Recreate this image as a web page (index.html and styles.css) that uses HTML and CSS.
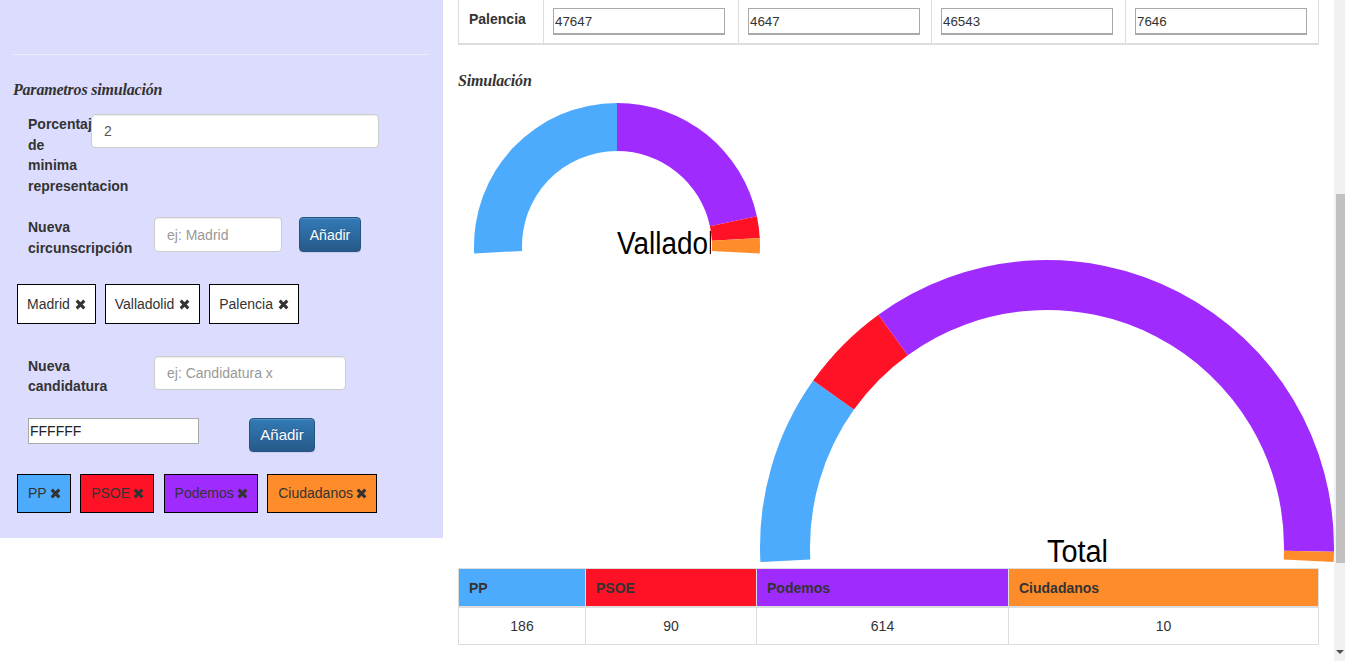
FILE: index.html
```html
<!DOCTYPE html>
<html lang="es">
<head>
<meta charset="utf-8">
<title>Simulación</title>
<link rel="stylesheet" href="styles.css">
</head>
<body>
<div class="app">
  <div class="page">
    <aside class="panel">
      <hr class="sep">
      <h4 class="title">Parametros simulación</h4>

      <div class="frow r1">
        <label class="lbl lbl-narrow">Porcentaje de minima representacion</label>
        <input class="fc fc-pct" type="text" value="2">
      </div>

      <div class="frow r2">
        <label class="lbl lbl-wide">Nueva circunscripción</label>
        <input class="fc fc-circ" type="text" placeholder="ej: Madrid">
        <button class="btn btn-a">Añadir</button>
      </div>

      <div class="tags tags-circ">
        <span class="tag">Madrid <svg class="x" viewBox="0 0 11 11"><path d="M1.7 1.7 L9.3 9.3 M9.3 1.7 L1.7 9.3"/></svg></span>
        <span class="tag">Valladolid <svg class="x" viewBox="0 0 11 11"><path d="M1.7 1.7 L9.3 9.3 M9.3 1.7 L1.7 9.3"/></svg></span>
        <span class="tag">Palencia <svg class="x" viewBox="0 0 11 11"><path d="M1.7 1.7 L9.3 9.3 M9.3 1.7 L1.7 9.3"/></svg></span>
      </div>

      <div class="frow r3">
        <label class="lbl lbl-wide">Nueva candidatura</label>
        <input class="fc fc-cand" type="text" placeholder="ej: Candidatura x">
      </div>

      <div class="frow r4">
        <input class="color-in" type="text" value="FFFFFF">
        <button class="btn btn-b">Añadir</button>
      </div>

      <div class="tags tags-party">
        <span class="tag ptag pp">PP<svg class="x" viewBox="0 0 11 11"><path d="M1.7 1.7 L9.3 9.3 M9.3 1.7 L1.7 9.3"/></svg></span>
        <span class="tag ptag psoe">PSOE<svg class="x" viewBox="0 0 11 11"><path d="M1.7 1.7 L9.3 9.3 M9.3 1.7 L1.7 9.3"/></svg></span>
        <span class="tag ptag podemos">Podemos<svg class="x" viewBox="0 0 11 11"><path d="M1.7 1.7 L9.3 9.3 M9.3 1.7 L1.7 9.3"/></svg></span>
        <span class="tag ptag cs">Ciudadanos<svg class="x" viewBox="0 0 11 11"><path d="M1.7 1.7 L9.3 9.3 M9.3 1.7 L1.7 9.3"/></svg></span>
      </div>
    </aside>

    <main class="content">
      <table class="dist">
        <colgroup>
          <col class="c0"><col class="c1"><col class="c2"><col class="c3"><col class="c4">
        </colgroup>
        <tr>
          <th>Palencia</th>
          <td><input class="num" type="text" value="47647"></td>
          <td><input class="num" type="text" value="4647"></td>
          <td><input class="num" type="text" value="46543"></td>
          <td><input class="num" type="text" value="7646"></td>
        </tr>
      </table>

      <h4 class="title sim-title">Simulación</h4>

      <svg class="chart-small" width="320" height="157" viewBox="0 0 320 157">
        <defs>
          <clipPath id="clipSmall"><rect x="0" y="0" width="253" height="160"/></clipPath>
        </defs>
        <text x="159" y="157" class="chart-label" clip-path="url(#clipSmall)" textLength="119" lengthAdjust="spacingAndGlyphs">Valladolid</text>
        <path fill="#4dabfd" d="M16.2,156.5 A143,143 0 0 1 159,6 L159,54 A95,95 0 0 0 64.13,153.97 Z"/>
        <path fill="#9f2bfe" d="M159,6 A143,143 0 0 1 298.88,119.27 L251.92,129.25 A95,95 0 0 0 159,54 Z"/>
        <path fill="#ff1226" d="M298.88,119.27 A143,143 0 0 1 301.78,141.02 L253.85,143.7 A95,95 0 0 0 251.92,129.25 Z"/>
        <path fill="#ff8c2b" d="M301.78,141.02 A143,143 0 0 1 301.8,156.48 L253.87,153.97 A95,95 0 0 0 253.85,143.7 Z"/>
      </svg>

      <svg class="chart-big" width="876" height="309" viewBox="0 0 876 309">
        <text x="589" y="308" class="chart-label" textLength="61" lengthAdjust="spacingAndGlyphs">Total</text>
        <path fill="#4dabfd" d="M302.39,308.02 A287,287 0 0 1 355.18,126.58 L395.92,155.57 A237,237 0 0 0 352.32,305.4 Z"/>
        <path fill="#ff1226" d="M355.18,126.58 A287,287 0 0 1 420.47,60.69 L449.83,101.16 A237,237 0 0 0 395.92,155.57 Z"/>
        <path fill="#9f2bfe" d="M420.47,60.69 A287,287 0 0 1 875.96,297.66 L825.97,296.85 A237,237 0 0 0 449.83,101.16 Z"/>
        <path fill="#ff8c2b" d="M875.96,297.66 A287,287 0 0 1 875.61,308.02 L825.68,305.4 A237,237 0 0 0 825.97,296.85 Z"/>
      </svg>

      <table class="result">
        <colgroup>
          <col class="k0"><col class="k1"><col class="k2"><col class="k3">
        </colgroup>
        <thead>
          <tr>
            <th class="pp">PP</th>
            <th class="psoe">PSOE</th>
            <th class="podemos">Podemos</th>
            <th class="cs">Ciudadanos</th>
          </tr>
        </thead>
        <tbody>
          <tr>
            <td>186</td>
            <td>90</td>
            <td>614</td>
            <td>10</td>
          </tr>
        </tbody>
      </table>
    </main>
  </div>

  <div class="scrollbar">
    <div class="thumb"></div>
    <div class="arrow"></div>
  </div>
</div>
</body>
</html>
```

FILE: styles.css
```css
* { box-sizing: border-box; }

html, body {
  margin: 0;
  padding: 0;
  height: 100%;
  overflow: hidden;
  background: #fff;
  font-family: "Liberation Sans", Arial, sans-serif;
  font-size: 14px;
  color: #333;
}

.app {
  display: flex;
  height: 661px;
  overflow: hidden;
}

.page {
  width: 1334px;
  flex: none;
  display: flex;
  align-items: flex-start;
  gap: 15px;
}

/* ---------- left panel ---------- */
.panel {
  width: 443px;
  height: 538px;
  flex: none;
  background: #dcdcfe;
  padding: 54px 15px 0 13px;
  display: flex;
  flex-direction: column;
}

.sep {
  margin: 0;
  border: 0;
  border-top: 1px solid #eeeef6;
  height: 0;
}

.title {
  margin: 26px 0 0 0;
  font-family: "Liberation Serif", "DejaVu Serif", serif;
  font-style: italic;
  font-weight: bold;
  font-size: 16px;
  line-height: 18px;
  color: #333;
  letter-spacing: -0.2px;
}

.frow {
  display: flex;
  align-items: flex-start;
  padding-left: 15px;
}

.r1 { margin-top: 15px; }
.r2 { margin-top: 21px; }
.r3 { margin-top: 32px; }
.r4 { margin-top: 21px; }

.lbl {
  flex: none;
  font-weight: bold;
  font-size: 14px;
  line-height: 20.6px;
  color: #333;
  white-space: normal;
}

.lbl-narrow { width: 63px; }
.lbl-wide { width: 112px; margin-right: 14px; }

.fc {
  display: block;
  flex: none;
  height: 34px;
  padding: 6px 12px;
  font-family: "Liberation Sans", Arial, sans-serif;
  font-size: 14px;
  color: #555;
  background: #fff;
  border: 1px solid #ccc;
  border-radius: 4px;
  box-shadow: inset 0 1px 1px rgba(0, 0, 0, .075);
  outline: none;
}

.fc::placeholder { color: #999; }

.fc-pct { width: 288px; }
.fc-circ { width: 128px; height: 35px; }
.fc-cand { width: 192px; }

.btn {
  display: block;
  flex: none;
  padding: 0;
  font-family: "Liberation Sans", Arial, sans-serif;
  color: #fff;
  background-image: linear-gradient(to bottom, #337ab7 0, #265a88 100%);
  border: 1px solid #245580;
  border-radius: 4px;
  text-shadow: 0 -1px 0 rgba(0, 0, 0, .2);
  box-shadow: inset 0 1px 0 rgba(255, 255, 255, .15), 0 1px 1px rgba(0, 0, 0, .075);
  cursor: pointer;
}

.btn-a {
  margin-left: 17px;
  width: 62px;
  height: 35px;
  font-size: 14px;
}

.btn-b {
  margin-left: 50px;
  width: 66px;
  height: 34px;
  font-size: 15px;
}

.color-in {
  display: block;
  flex: none;
  width: 171px;
  height: 26px;
  padding: 0 1px;
  font-family: "Liberation Sans", Arial, sans-serif;
  font-size: 14px;
  color: #222;
  background: #fff;
  border: 1px solid #a9a9a9;
  outline: none;
}

/* tags */
.tags {
  display: flex;
  margin-left: 4px;
}

.tags-circ { margin-top: 25px; gap: 9px; }
.tags-party { margin-top: 22px; gap: 9.5px; }

.tag {
  display: inline-flex;
  align-items: center;
  height: 40px;
  padding: 0 9px 0 9px;
  border: 1px solid #000;
  background: #fff;
  color: #333;
  font-size: 14px;
  white-space: pre;
}

.x {
  display: block;
  flex: none;
  width: 11px;
  height: 11px;
  margin-left: 1px;
  margin-top: 1px;
}

.x path {
  fill: none;
  stroke: #333;
  stroke-width: 3.1;
}

.ptag {
  height: 39px;
  padding: 0 9px 0 10px;
}

.ptag .x { margin-left: 3px; }

.pp { background: #4dabfd; }
.psoe { background: #ff1226; }
.podemos { background: #9f2bfe; }
.cs { background: #ff8c2b; }

/* ---------- right content ---------- */
.content {
  width: 860px;
  flex: none;
  display: flex;
  flex-direction: column;
}

.dist {
  width: 860px;
  table-layout: fixed;
  border-collapse: collapse;
  border-bottom: 2px solid #ddd;
}

.dist .c0 { width: 85px; }
.dist .c1 { width: 195px; }
.dist .c2 { width: 193px; }
.dist .c3 { width: 194px; }
.dist .c4 { width: 193px; }

.dist th,
.dist td {
  border-left: 1px solid #ddd;
  border-right: 1px solid #ddd;
  border-top: 0;
  border-bottom: 2px solid #ddd;
  padding: 8px 9px;
  vertical-align: top;
}

.dist th {
  text-align: left;
  font-weight: bold;
  font-size: 14px;
  line-height: 20px;
  padding: 9px 10px 7px;
}

.num {
  display: block;
  width: 172px;
  height: 27px;
  padding: 0 1px;
  font-family: "Liberation Sans", Arial, sans-serif;
  font-size: 13.33px;
  color: #333;
  background: #fff;
  border: 1px solid #a9a9a9;
  border-bottom-width: 2px;
  outline: none;
}

.sim-title {
  margin: 27px 0 0 0;
}

.chart-small {
  display: block;
  margin-top: 7px;
  overflow: visible;
}

.chart-big {
  display: block;
  overflow: visible;
}

.chart-label {
  font-family: "Liberation Sans", Arial, sans-serif;
  font-size: 31px;
  fill: #000;
}

.result {
  margin-top: 5px;
  width: 860px;
  table-layout: fixed;
  border-collapse: collapse;
}

.result .k0 { width: 127px; }
.result .k1 { width: 171px; }
.result .k2 { width: 252px; }
.result .k3 { width: 310px; }

.result th,
.result td {
  border: 1px solid #ddd;
  padding: 8px 10px;
  line-height: 20px;
  font-size: 14px;
}

.result th {
  text-align: left;
  font-weight: bold;
  color: #333;
  border-bottom: 2px solid #ddd;
  padding-top: 9px;
  padding-bottom: 8px;
}

.result td {
  text-align: center;
  color: #333;
}

/* ---------- scrollbar ---------- */
.scrollbar {
  width: 11px;
  flex: none;
  height: 661px;
  background: #f1f1f1;
  display: flex;
  flex-direction: column;
  align-items: flex-end;
}

.thumb {
  margin-top: 194px;
  width: 9px;
  height: 369px;
  background: #c1c1c1;
}

.arrow {
  margin-top: auto;
  margin-bottom: 7px;
  margin-right: 1px;
  width: 0;
  height: 0;
  border-left: 4px solid transparent;
  border-right: 4px solid transparent;
  border-top: 4px solid #505050;
}
```
